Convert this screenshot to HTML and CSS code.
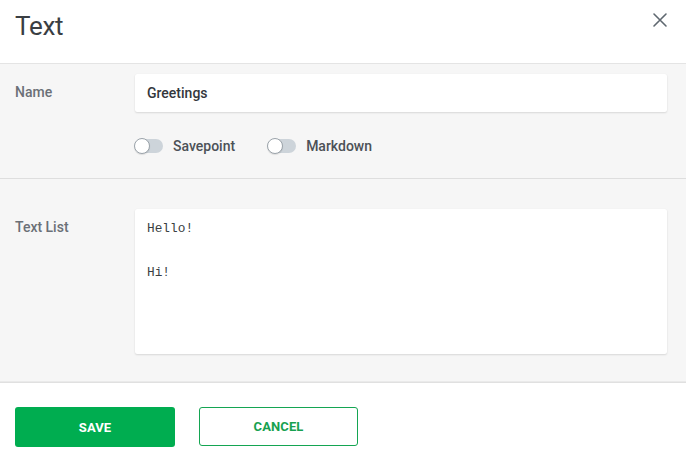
FILE: index.html
```html
<!DOCTYPE html>
<html>
<head>
<meta charset="utf-8">
<link rel="stylesheet" href="styles.css">
</head>
<body>
<div class="dialog">
  <header class="head">
    <h1 class="title">Text</h1>
    <button class="close" aria-label="Close">
      <svg width="16" height="16" viewBox="0 0 16 16"><path d="M2 2L14 14M14 2L2 14" stroke="#5f6870" stroke-width="1.6" stroke-linecap="round"/></svg>
    </button>
  </header>
  <section class="sec sec-name">
    <div class="row">
      <label class="lbl lbl-name">Name</label>
      <div class="field input">Greetings</div>
    </div>
    <div class="toggles">
      <div class="tog"><span class="track"><span class="knob"></span></span><span class="tlabel">Savepoint</span></div>
      <div class="tog"><span class="track"><span class="knob"></span></span><span class="tlabel">Markdown</span></div>
    </div>
  </section>
  <section class="sec sec-list">
    <div class="row">
      <label class="lbl lbl-list">Text List</label>
      <div class="field area">Hello!<br><br>Hi!</div>
    </div>
  </section>
  <footer class="foot">
    <button class="btn save">SAVE</button>
    <button class="btn cancel">CANCEL</button>
  </footer>
</div>
</body>
</html>
```
FILE: styles.css
```css
* { box-sizing: border-box; }
html, body { margin: 0; padding: 0; background: #fff; }
body { font-family: Roboto, "Liberation Sans", sans-serif; width: 686px; height: 462px; overflow: hidden; }
.dialog { display: flex; flex-direction: column; height: 462px; }
.head { height: 64px; display: flex; justify-content: space-between; align-items: flex-start; border-bottom: 1px solid #e4e4e4; }
.title { margin: 0; padding: 10px 0 0 15px; font-size: 26px; font-weight: 400; color: #3a3e43; line-height: 32px; letter-spacing: -0.3px; }
.close { background: none; border: 0; padding: 0; margin: 12px 18px 0 0; width: 16px; height: 16px; display: flex; }
.sec { background: #f6f6f6; }
.sec-name { padding: 10px 19px 0 15px; height: 115px; border-bottom: 1px solid #dedede; }
.sec-list { padding: 30px 19px 0 15px; height: 204px; border-bottom: 1px solid #e0e0e0; box-shadow: inset 0 -4px 0 -3px #eaeaea; }
.row { display: flex; align-items: flex-start; }
.lbl { width: 120px; flex: none; font-size: 14px; font-weight: 500; color: #6b7077; }
.lbl-name { padding-top: 10px; }
.lbl-list { padding-top: 10px; }
.field { flex: 1; background: #fff; border-radius: 2px; box-shadow: 0 1px 2px rgba(0,0,0,0.12), 0 0 1px rgba(0,0,0,0.06); }
.input { height: 38px; padding: 0 12px; line-height: 38px; font-size: 14px; font-weight: 500; color: #33373c; }
.area { height: 145px; padding: 9px 12px; font-family: "Liberation Mono", "DejaVu Sans Mono", monospace; font-size: 12.8px; line-height: 22px; color: #3a3e42; }
.toggles { display: flex; gap: 33px; padding: 26px 0 0 120px; }
.tog { display: flex; align-items: center; gap: 10px; }
.track { position: relative; width: 28px; height: 14px; border-radius: 7px; background: #cdd4da; display: block; }
.knob { position: absolute; left: -1px; top: -1px; width: 16px; height: 16px; border-radius: 50%; background: #fff; border: 1px solid #9ba3aa; box-shadow: 0 1px 1px rgba(0,0,0,0.1); }
.tlabel { font-size: 14px; font-weight: 500; color: #4c5157; }
.foot { padding: 24px 15px 0; display: flex; gap: 24px; }
.btn { width: 160px; height: 40px; border-radius: 3px; font-family: Roboto, "Liberation Sans", sans-serif; font-size: 13px; font-weight: 700; letter-spacing: 0.1px; }
.save { background: #00ad50; border: 0; color: #fff; }
.cancel { background: #fff; border: 1px solid #14a552; color: #17a150; width: 159px; height: 39px; }
```
